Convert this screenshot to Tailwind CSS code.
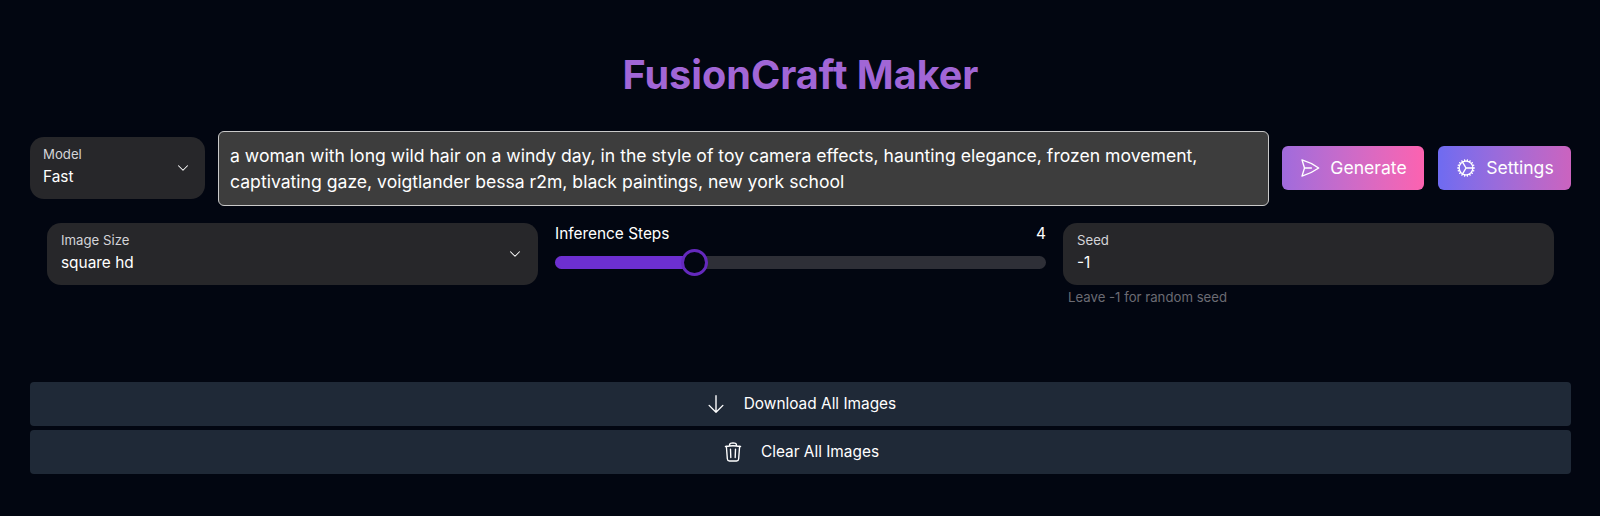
<!DOCTYPE html>
<html lang="en">
<head>
<meta charset="utf-8">
<title>FusionCraft Maker</title>
<script src="https://cdn.jsdelivr.net/npm/@tailwindcss/browser@4"></script>
</head>
<body class="bg-[#020611] font-[Inter,sans-serif] text-white h-[516px] overflow-hidden">
<main class="pl-[30px] pr-[29px]">
  <h1 class="pt-[50px] h-[131px] text-center text-[39.6px] leading-[50px] font-bold text-[#a166d6]">FusionCraft Maker</h1>

  <div class="flex items-center gap-[13px] h-[75px]">
    <div class="w-[175px] h-[62px] mb-[1px] shrink-0 rounded-[14px] bg-[#27272a] pl-[13px] pr-[13px] flex items-center justify-between">
      <div class="self-start pt-[7px]">
        <div class="text-[13.2px] leading-[20px] text-[#d4d4d8]">Model</div>
        <div class="text-[15.4px] leading-[25px]">Fast</div>
      </div>
      <svg class="w-[18px] h-[18px]" viewBox="0 0 24 24" fill="none" stroke="#ffffff" stroke-width="1.4" stroke-linecap="round" stroke-linejoin="round"><path d="m6 9 6 6 6-6"/></svg>
    </div>
    <div class="flex-1 h-[75px] rounded-[6px] border border-[#c9c9c9] bg-[#3d3d3d] px-[11px] py-[11px] text-[17.6px] leading-[26px]">a woman with long wild hair on a windy day, in the style of toy camera effects, haunting elegance, frozen movement, captivating gaze, voigtlander bessa r2m, black paintings, new york school</div>
    <button class="w-[142px] h-[44px] mb-[1px] shrink-0 rounded-[6px] bg-gradient-to-r from-[#a06bdc] to-[#fc62b0] flex items-center justify-center gap-[9px] text-[17.6px]">
      <svg class="w-[22px] h-[22px]" viewBox="0 0 24 24" fill="none" stroke="currentColor" stroke-width="1.5" stroke-linecap="round" stroke-linejoin="round"><path d="M6 12 3.269 3.126A59.768 59.768 0 0 1 21.485 12 59.77 59.77 0 0 1 3.27 20.876L5.999 12Zm0 0h7.5"/></svg>
      Generate
    </button>
    <button class="w-[133px] h-[44px] mb-[1px] ml-[1px] shrink-0 rounded-[6px] bg-gradient-to-r from-[#6e6bf1] to-[#cb63bf] flex items-center justify-center gap-[9px] text-[17.6px]">
      <svg class="w-[22px] h-[22px]" viewBox="0 0 24 24" fill="none" stroke="currentColor" stroke-width="1.5" stroke-linecap="round" stroke-linejoin="round"><path d="M4.5 12a7.5 7.5 0 0 0 15 0m-15 0a7.5 7.5 0 1 1 15 0m-15 0H3m16.5 0H21m-1.5 0H12m-8.457 3.077 1.41-.513m14.095-5.13 1.41-.513M5.106 17.785l1.15-.964m11.49-9.642 1.149-.964M7.501 19.795l.75-1.3m7.5-12.99.75-1.3m-6.063 16.658.26-1.477m2.605-14.772.26-1.477m0 17.726-.26-1.477M10.698 4.614l-.26-1.477M16.5 19.794l-.75-1.299M7.5 4.205 12 12m6.894 5.785-1.149-.964M6.256 7.178l-1.15-.964m15.352 8.864-1.41-.513M4.954 9.435l-1.41-.514M12.002 12l-3.75 6.495"/></svg>
      Settings
    </button>
  </div>

  <div class="grid grid-cols-3 gap-[17px] px-[17px] mt-[17px] h-[159px]">
    <div class="h-[62px] rounded-[14px] bg-[#27272a] px-[14px] flex items-center justify-between">
      <div class="self-start pt-[7px]">
        <div class="text-[13.2px] leading-[20px] text-[#d4d4d8]">Image Size</div>
        <div class="text-[15.4px] leading-[25px]">square hd</div>
      </div>
      <svg class="w-[18px] h-[18px]" viewBox="0 0 24 24" fill="none" stroke="#ffffff" stroke-width="1.4" stroke-linecap="round" stroke-linejoin="round"><path d="m6 9 6 6 6-6"/></svg>
    </div>
    <div>
      <div class="flex justify-between pt-[1px] text-[15.4px] leading-[20px]">
        <span>Inference Steps</span><span>4</span>
      </div>
      <div class="relative mt-[12px] h-[13px] rounded-full bg-[#2e2f37]">
        <div class="h-full w-[139px] rounded-full bg-[#6d2fd1]"></div>
        <div class="absolute left-[126px] top-[-7px] w-[27px] h-[27px] rounded-full bg-[#020611] border-[3px] border-[#6429bd]"></div>
      </div>
    </div>
    <div>
      <div class="h-[62px] rounded-[14px] bg-[#27272a] px-[14px] pt-[7px]">
        <div class="text-[13.2px] leading-[20px] text-[#d4d4d8]">Seed</div>
        <div class="text-[15.4px] leading-[25px]">-1</div>
      </div>
      <div class="mt-[4px] px-[5px] text-[13.2px] leading-[16px] text-[#6b6b73]">Leave -1 for random seed</div>
    </div>
  </div>

  <div class="flex flex-col gap-[4px]">
    <button class="h-[44px] rounded-[4px] bg-[#1f2937] flex items-center justify-center gap-[17px] text-[15.4px]">
      <svg class="w-[22px] h-[22px]" viewBox="0 0 24 24" fill="none" stroke="currentColor" stroke-width="1.5" stroke-linecap="round" stroke-linejoin="round"><path d="M19.5 13.5 12 21m0 0-7.5-7.5M12 21V3"/></svg>
      Download All Images
    </button>
    <button class="h-[44px] rounded-[4px] bg-[#1f2937] flex items-center justify-center gap-[17px] text-[15.4px]">
      <svg class="w-[22px] h-[22px]" viewBox="0 0 24 24" fill="none" stroke="currentColor" stroke-width="1.5" stroke-linecap="round" stroke-linejoin="round"><path d="m14.74 9-.346 9m-4.788 0L9.26 9m9.968-3.21c.342.052.682.107 1.022.166m-1.022-.165L18.16 19.673a2.25 2.25 0 0 1-2.244 2.077H8.084a2.25 2.25 0 0 1-2.244-2.077L4.772 5.79m14.456 0a48.108 48.108 0 0 0-3.478-.397m-12 .562c.34-.059.68-.114 1.022-.165m0 0a48.11 48.11 0 0 1 3.478-.397m7.5 0v-.916c0-1.18-.91-2.164-2.09-2.201a51.964 51.964 0 0 0-3.32 0c-1.18.037-2.09 1.022-2.09 2.201v.916m7.5 0a48.667 48.667 0 0 0-7.5 0"/></svg>
      Clear All Images
    </button>
  </div>
</main>
</body>
</html>
